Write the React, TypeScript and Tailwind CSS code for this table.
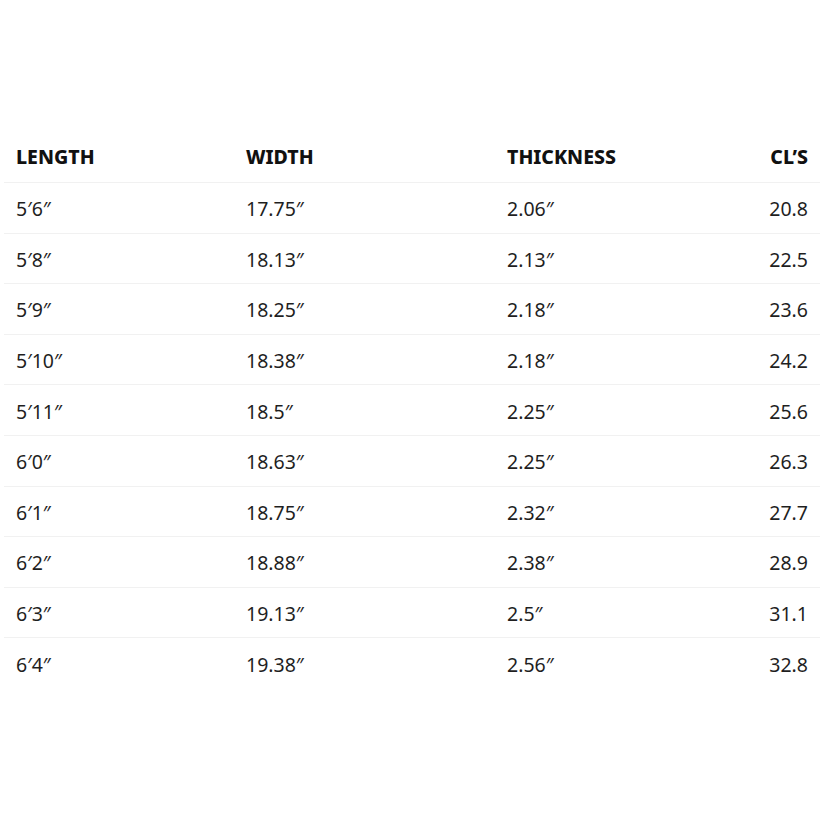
const rows = [
  ["5′6″", "17.75″", "2.06″", "20.8"],
  ["5′8″", "18.13″", "2.13″", "22.5"],
  ["5′9″", "18.25″", "2.18″", "23.6"],
  ["5′10″", "18.38″", "2.18″", "24.2"],
  ["5′11″", "18.5″", "2.25″", "25.6"],
  ["6′0″", "18.63″", "2.25″", "26.3"],
  ["6′1″", "18.75″", "2.32″", "27.7"],
  ["6′2″", "18.88″", "2.38″", "28.9"],
  ["6′3″", "19.13″", "2.5″", "31.1"],
  ["6′4″", "19.38″", "2.56″", "32.8"],
];

export default function App() {
  return (
    <div
      className="h-[820px] w-[820px] overflow-hidden bg-white pl-[4px] pt-[132px]"
      style={{ fontFamily: '"Noto Sans", "Open Sans", sans-serif' }}
    >
      <div className="grid h-[50px] grid-cols-[230px_261px_1fr_auto] items-center px-3 text-[19.5px] font-extrabold text-[#111]">
        <div>LENGTH</div>
        <div>WIDTH</div>
        <div>THICKNESS</div>
        <div className="text-right">CL’S</div>
      </div>
      {rows.map((row) => (
        <div
          key={row[0]}
          className="grid h-[50.6px] grid-cols-[230px_261px_1fr_auto] items-center border-t border-[#f1f1f1] px-3 pt-[2px] text-[19.5px] text-[#1f1f1f]"
        >
          <div>{row[0]}</div>
          <div>{row[1]}</div>
          <div>{row[2]}</div>
          <div className="text-right">{row[3]}</div>
        </div>
      ))}
    </div>
  );
}
